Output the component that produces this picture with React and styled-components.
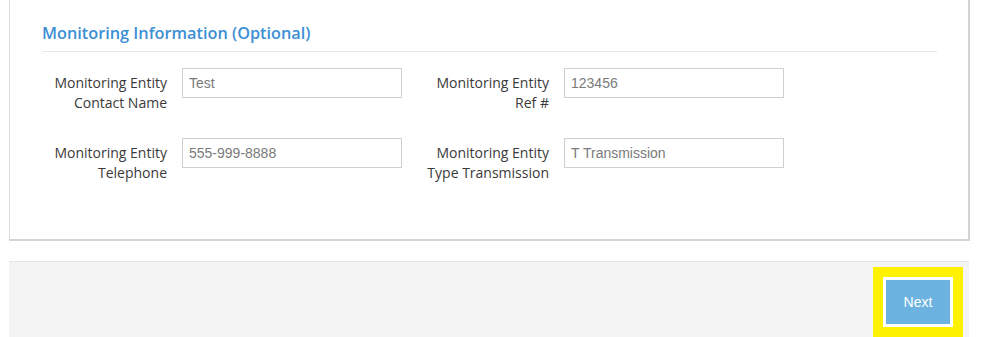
import React from "react";
import styled, { createGlobalStyle } from "styled-components";

const GlobalStyle = createGlobalStyle`
  body {
    margin: 0;
    background: #fff;
    font-family: "Open Sans", "Liberation Sans", sans-serif;
    overflow: hidden;
  }
`;

const fields = [
  [
    { label: ["Monitoring Entity", "Contact Name"], value: "Test" },
    { label: ["Monitoring Entity", "Ref #"], value: "123456" },
  ],
  [
    { label: ["Monitoring Entity", "Telephone"], value: "555-999-8888" },
    { label: ["Monitoring Entity", "Type Transmission"], value: "T Transmission" },
  ],
];

function Field({ label, value }) {
  return (
    <FieldGroup>
      <Label>
        {label[0]}
        <br />
        {label[1]}
      </Label>
      <Input defaultValue={value} readOnly />
    </FieldGroup>
  );
}

export default function App() {
  return (
    <Page>
      <GlobalStyle />
      <Panel>
        <Heading>Monitoring Information (Optional)</Heading>
        <Form>
          {fields.map((row, i) => (
            <Row key={i}>
              {row.map((f) => (
                <Field key={f.value} {...f} />
              ))}
            </Row>
          ))}
        </Form>
      </Panel>
      <Footer>
        <Highlight>
          <NextButton>Next</NextButton>
        </Highlight>
      </Footer>
    </Page>
  );
}

const Page = styled.div`
  width: 1002px;
  height: 337px;
  padding-left: 9px;
  box-sizing: border-box;
  display: flex;
  flex-direction: column;
  overflow: hidden;
`;

const Panel = styled.div`
  width: 961px;
  box-sizing: border-box;
  border-left: 1px solid #dcdcdc;
  border-right: 2px solid #d4d4d4;
  border-bottom: 2px solid #d4d4d4;
  padding: 21px 31px 56px 32px;
`;

const Heading = styled.h3`
  margin: 0;
  font-size: 16.3px;
  line-height: 24px;
  font-weight: 600;
  color: #3d8fd4;
  padding-bottom: 6px;
  border-bottom: 1px solid #e1e7eb;
`;

const Form = styled.div`
  display: flex;
  flex-direction: column;
  gap: 25px;
  padding-top: 16px;
`;

const Row = styled.div`
  display: grid;
  grid-template-columns: 382px 382px;
`;

const FieldGroup = styled.div`
  display: flex;
  align-items: flex-start;
  gap: 15px;
`;

const Label = styled.div`
  width: 125px;
  text-align: right;
  font-size: 14px;
  line-height: 20px;
  padding-top: 5px;
  color: #3a3a3a;
`;

const Input = styled.input`
  width: 220px;
  height: 30px;
  box-sizing: border-box;
  border: 1px solid #cfcfcf;
  padding: 0 6px;
  font-family: "Liberation Sans", Arial, sans-serif;
  font-size: 14px;
  color: #7a7a7a;
  outline: none;
`;

const Footer = styled.div`
  margin-top: 20px;
  width: 960px;
  flex: 1;
  box-sizing: border-box;
  background: #f4f4f4;
  border-top: 1px solid #e4e4e4;
  display: flex;
  justify-content: flex-end;
  align-items: flex-start;
  padding: 5px 6px 0 0;
`;

const Highlight = styled.div`
  border: 10px solid #fff200;
  padding: 3px;
  background: #fff;
`;

const NextButton = styled.button`
  display: block;
  width: 64px;
  height: 44px;
  border: none;
  background: #6db3df;
  color: #fff;
  font-family: "Liberation Sans", Arial, sans-serif;
  font-size: 14px;
  padding: 0;
`;
